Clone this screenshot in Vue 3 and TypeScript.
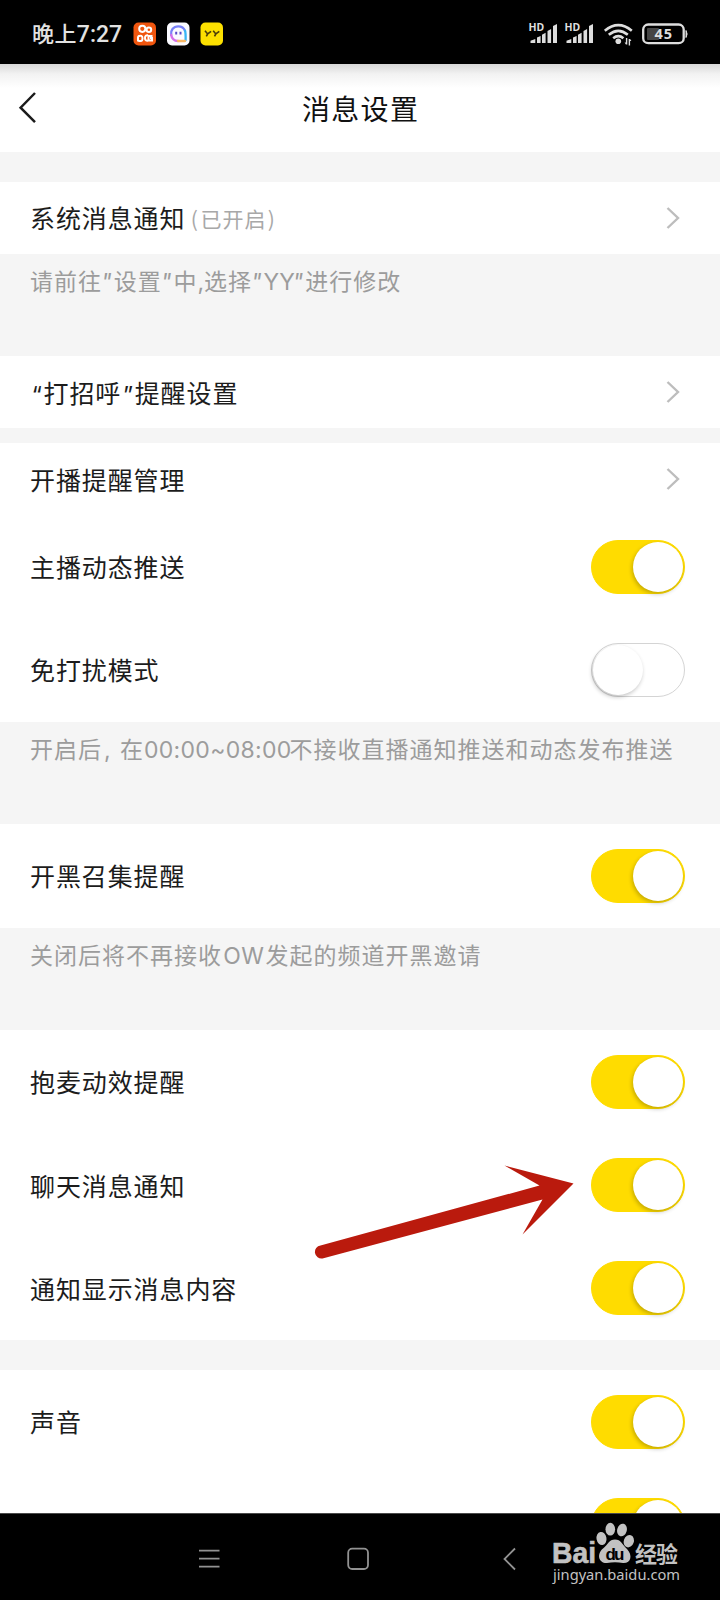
<script setup lang="ts">
interface Run {
  text: string
  kind?: string
}
interface Row {
  label: Run[]
  state?: string
  on?: boolean
  link?: boolean
}
interface Group {
  rows: Row[]
  note?: Run[]
  gap?: string
}

const groups: Group[] = [
  {
    rows: [{ label: [{ text: '系统消息通知' }], state: '已开启', link: true }],
    note: [
      { text: '请前往' },
      { text: '"', kind: 'quote' },
      { text: '设置' },
      { text: '"', kind: 'quote' },
      { text: '中' },
      { text: ',', kind: 'comma' },
      { text: '选择' },
      { text: '"', kind: 'quote' },
      { text: 'YY', kind: 'brand' },
      { text: '"', kind: 'quote' },
      { text: '进行修改' },
    ],
  },
  {
    rows: [
      {
        label: [
          { text: '“', kind: 'curly' },
          { text: '打招呼' },
          { text: '”', kind: 'curly' },
          { text: '提醒设置' },
        ],
        link: true,
      },
    ],
    gap: 'small',
  },
  {
    rows: [
      { label: [{ text: '开播提醒管理' }], link: true },
      { label: [{ text: '主播动态推送' }], on: true },
      { label: [{ text: '免打扰模式' }], on: false },
    ],
    note: [
      { text: '开启后' },
      { text: ',', kind: 'pause' },
      { text: '在' },
      { text: '00:00~08:00', kind: 'hours' },
      { text: '不接收直播通知推送和动态发布推送' },
    ],
  },
  {
    rows: [{ label: [{ text: '开黑召集提醒' }], on: true }],
    note: [{ text: '关闭后将不再接收' }, { text: 'OW', kind: 'game' }, { text: '发起的频道开黑邀请' }],
  },
  {
    rows: [
      { label: [{ text: '抱麦动效提醒' }], on: true },
      { label: [{ text: '聊天消息通知' }], on: true },
      { label: [{ text: '通知显示消息内容' }], on: true },
    ],
    gap: 'large',
  },
  {
    rows: [
      { label: [{ text: '声音' }], on: true },
      { label: [], on: true },
    ],
  },
]
</script>

<template>
  <div class="phone">
    <header class="status">
      <span class="time"><span class="ampm">晚上</span>7:27</span>
      <svg class="apps" width="90" height="24" viewBox="0 0 90 24">
        <rect x="0.5" y="0.5" width="22.5" height="23" rx="5" fill="#f0560f" />
        <g fill="none" stroke="#fff" stroke-width="2">
          <circle cx="9.3" cy="6.8" r="3.1" />
          <circle cx="15.9" cy="7.8" r="2.3" />
          <path d="M5 14.3v4.2q4.5 1.8 4.5-2.1t-4.5-2.100" />
          <path d="M15 13.300q-3-.5-3 2.700t3 2.800M19.500 14h-4v4.500h3.500V16h-2" />
        </g>
        <rect x="34" y="0.5" width="22.5" height="23" rx="5" fill="#fafaff" />
        <g fill="none" stroke-width="2.300" stroke-linecap="round">
          <path d="M38.200 13c-.8-5 2.300-8.700 7-8.700 3.300 0 5.800 1.700 6.800 4.500" stroke="#7880f8" />
          <path d="M52 8.800q.8 2 .6 9.500" stroke="#37b5f5" />
          <path d="M38.200 13q1 5.700 6.800 6" stroke="#d56fe8" />
          <path d="M45 19h7" stroke="#f7b764" />
        </g>
        <path d="M43.200 9.800v2.800M47.500 9.800v2.800" stroke="#594ac9" stroke-width="2" />
        <rect x="67.500" y="0.5" width="22.500" height="23" rx="5" fill="#fce000" />
        <path d="m72 8.800 2.600 3.200 3.500-2.700M74.600 12l-1.300 2.400M80.200 8.800l2.600 3.200 3.500-2.700M82.800 12l-1.300 2.400" fill="none" stroke="#4b3e09" stroke-width="1.600" />
      </svg>
      <svg class="system" width="170" height="30" viewBox="0 0 170 30">
        <g fill="#dedede">
          <g v-for="x in [0, 36]" :key="x" :transform="`translate(${x} 0)`">
            <text class="hd" x="-0.5" y="8.500">HD</text>
            <path d="M1.500 21v-2.200L6.300 17v4zM8 15.500l3.600-1.500v7H8zM13 12.800l3.600-2v10.200H13zM18.500 9l3.600-2v14h-3.600zM24 4l4-2v19h-4z" />
          </g>
          <circle cx="89.300" cy="19.300" r="2.800" />
          <path d="M98.300 16v6.500h-1.400l-1.300-2h1.300V16zM99.700 23.500V17h1.400l1.300 2h-1.300v4.500z" />
        </g>
        <g fill="none" stroke="#dedede" stroke-width="2.600">
          <path d="M75.800 8.700q13.500-11 27 0M79.800 12.800q9.500-8 19 0M84.200 16.200q5.200-4.200 10.200 0" />
          <rect x="114.200" y="2.500" width="40.500" height="18.700" rx="5" stroke-width="2.300" />
        </g>
        <rect x="118" y="6" width="12" height="12" rx="1" fill="#454545" />
        <path d="M157 8.500q2.200 3.500 0 7z" fill="#dedede" stroke="#dedede" />
        <text class="battery" x="125.500" y="17.300">45</text>
      </svg>
    </header>

    <div class="topbar">
      <svg class="back" width="20" height="34" viewBox="0 0 20 34">
        <path d="M18 2 3.600 16.700 18 31.200" fill="none" stroke="#1b1b1b" stroke-width="2.500" />
      </svg>
      <h1>消息设置</h1>
    </div>

    <main>
      <section v-for="(group, i) in groups" :key="i">
        <div v-for="(row, r) in group.rows" :key="r" class="row" :class="{ link: row.link }">
          <span class="label"><span v-for="(run, k) in row.label" :key="k" :class="run.kind">{{ run.text }}</span></span>
          <span v-if="row.state" class="state"><span class="paren">(</span>{{ row.state }}<span class="paren">)</span></span>
          <svg v-if="row.link" class="chevron" width="16" height="24" viewBox="0 0 16 24">
            <path d="M2.500 2 13 12 2.500 22" fill="none" stroke="#bdbdbd" stroke-width="2.400" />
          </svg>
          <span v-else class="toggle" :class="{ on: row.on }"><i class="knob"></i></span>
        </div>
        <p v-if="group.note" class="note"><span v-for="(run, k) in group.note" :key="k" :class="run.kind">{{ run.text }}</span></p>
        <div v-if="group.gap" class="gap" :class="group.gap"></div>
      </section>
    </main>

    <footer class="nav">
      <svg width="720" height="87" viewBox="0 0 720 87">
        <g fill="none" stroke="#929292" stroke-width="1.800">
          <path d="M199 37.600h20.500M199 45.700h20.500M199 53.700h20.500" />
          <rect x="348.200" y="35.700" width="19.800" height="20.300" rx="4" />
          <path d="m515 35.500-10.500 10.500 10.500 10.500" />
        </g>
        <g fill="#c2c2c2">
          <ellipse cx="601.500" cy="25.500" rx="5" ry="6.500" transform="rotate(-10 601.5 25.5)" />
          <ellipse cx="610.300" cy="16.200" rx="4.800" ry="6.400" />
          <ellipse cx="622" cy="17" rx="4.800" ry="6.400" transform="rotate(15 622 17)" />
          <ellipse cx="628.800" cy="28.200" rx="5" ry="6.300" transform="rotate(20 628.8 28.2)" />
          <path d="M615 26.500c-6 0-7 5-12 9-7 6-4 15 4 14.500q8-1.600 16 0c8 .5 10-7.500 4-14-5-4.500-6-9.500-12-9.500z" />
          <text class="bai" x="552" y="49.500" textLength="44" lengthAdjust="spacingAndGlyphs">Bai</text>
          <text class="jingyan" x="635" y="48.500" textLength="43">经验</text>
          <text class="url" x="553" y="66.500" textLength="127" lengthAdjust="spacingAndGlyphs">jingyan.baidu.com</text>
        </g>
        <text class="du" x="605.500" y="46.500" textLength="19">du</text>
      </svg>
    </footer>

    <svg class="arrow" width="264" height="96" viewBox="0 0 264 96">
      <path d="M4.500 80.500 223.500 20.500 188.500 0.500 257.500 18.500 206.500 69.500 226.500 34.500 6.500 93.500A6.500 6.500 0 0 1 4.500 80.500Z" fill="#ba1a0d" />
    </svg>
  </div>
</template>

<style>
body {
  margin: 0;
  background: #000;
}
</style>

<style scoped>
* {
  box-sizing: border-box;
}
.phone {
  position: relative;
  display: flex;
  flex-direction: column;
  width: 720px;
  height: 1600px;
  overflow: hidden;
  background: #fff;
  color: #1c1c1c;
  font-family: "Noto Sans CJK SC", sans-serif;
}
.status {
  display: flex;
  flex: none;
  align-items: flex-start;
  height: 64px;
  padding-left: 32px;
  background: #000;
  color: #e2e2e2;
}
.time {
  width: 101px;
  padding-top: 18px;
  font: 500 23px/34px Roboto, "Noto Sans CJK SC", sans-serif;
  white-space: nowrap;
}
.ampm {
  font-size: 22px;
  letter-spacing: 0.4px;
}
.apps {
  margin-top: 22px;
}
.system {
  margin: 22px 0 0 306px;
  overflow: visible;
}
.hd {
  font: 700 10.5px "Noto Sans", sans-serif;
}
.battery {
  fill: #dedede;
  font: 700 14.5px "Noto Sans", sans-serif;
  letter-spacing: 1px;
}
.topbar {
  display: flex;
  flex: none;
  align-items: center;
  height: 88px;
  padding-left: 17px;
  background: linear-gradient(#d8d8d8, #f2f2f2 10px, #fff 24px);
}
.back {
  margin-top: -1px;
}
h1 {
  margin: 0 0 0 265px;
  color: #111;
  font-size: 28px;
  font-weight: 400;
  letter-spacing: 1.3px;
  line-height: 40px;
}
main {
  flex: 1;
  min-height: 0;
  overflow: hidden;
  padding-top: 30px;
  background: #f5f5f5;
}
.row {
  display: flex;
  align-items: center;
  height: 103.25px;
  padding: 0 35px 0 30px;
  background: #fff;
}
.row.link {
  height: 71.8px;
}
.label {
  margin-top: -1px;
  font-size: 25px;
  letter-spacing: 0.9px;
  line-height: 36px;
  white-space: nowrap;
}
.curly {
  display: inline-block;
  width: 13.5px;
  font-family: Inter, sans-serif;
  font-size: 23px;
  letter-spacing: 0;
  line-height: 24px;
  text-align: center;
}
.state {
  margin-left: 4px;
  color: #a8a8a8;
  font-size: 21px;
  letter-spacing: 1px;
  line-height: 36px;
  white-space: nowrap;
}
.paren {
  display: inline-block;
  width: 11px;
  text-align: center;
}
.chevron {
  margin-right: 4px;
  margin-left: auto;
}
.toggle {
  display: flex;
  align-items: center;
  width: 94px;
  height: 54px;
  margin-left: auto;
  padding: 0 1px;
  border: 1px solid #d4d4d4;
  border-radius: 27px;
}
.toggle.on {
  justify-content: flex-end;
  border-color: #ffdc00;
  background: #ffdc00;
}
.knob {
  width: 50px;
  height: 50px;
  border-radius: 50%;
  background: #fff;
  box-shadow: -1px 2px 4px rgba(0, 0, 0, 0.24);
}
.note {
  height: 102.7px;
  margin: 0;
  padding: 8.5px 0 0 30px;
  color: #9c9c9c;
  font-size: 23px;
  letter-spacing: 1px;
  line-height: 36px;
  white-space: nowrap;
}
.quote,
.comma,
.brand,
.pause,
.hours,
.game {
  display: inline-block;
  font-family: Inter, sans-serif;
  font-weight: 400;
  letter-spacing: 0;
  line-height: 26px;
}
.quote {
  width: 11.7px;
  font-style: italic;
  text-indent: -1px;
}
.comma {
  width: 6.5px;
}
.brand {
  width: 30px;
  text-align: center;
}
.pause {
  width: 18px;
  padding-left: 2px;
}
.hours {
  width: 145.5px;
  font-size: 23px;
  letter-spacing: 0.3px;
}
.game {
  width: 43.5px;
  letter-spacing: 0.5px;
  text-align: center;
}
.gap.small {
  height: 15px;
}
.gap.large {
  height: 30px;
}
.nav {
  flex: none;
  height: 87px;
  border-top: 1px solid #4a4a4a;
  background: #000;
}
.nav svg {
  display: block;
  margin-top: -1px;
}
.bai {
  font: 700 29px "Liberation Sans", sans-serif;
  stroke: #c2c2c2;
  stroke-width: 0.6px;
}
.du {
  fill: #000;
  font: 700 17px "Liberation Sans", sans-serif;
}
.jingyan {
  font: 700 22px "Noto Sans CJK SC", sans-serif;
}
.url {
  font: 400 15px "Noto Sans", sans-serif;
}
.arrow {
  position: absolute;
  top: 1165px;
  left: 316px;
  overflow: visible;
}
</style>
